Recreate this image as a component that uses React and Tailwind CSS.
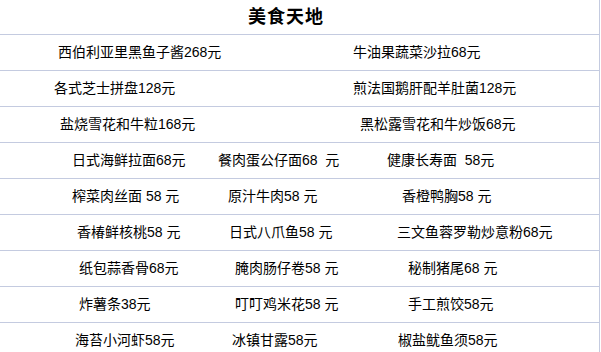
const wide = [
  [
    { text: "西伯利亚里黑鱼子酱", price: "268元", pad: "pl-[58px]" },
    { text: "牛油果蔬菜沙拉", price: "68元", pad: "pl-[53px]" },
  ],
  [
    { text: "各式芝士拼盘", price: "128元", pad: "pl-[54px]" },
    { text: "煎法国鹅肝配羊肚菌", price: "128元", pad: "pl-[53px]" },
  ],
  [
    { text: "盐烧雪花和牛粒", price: "168元", pad: "pl-[60px]" },
    { text: "黑松露雪花和牛炒饭", price: "68元", pad: "pl-[60px]" },
  ],
]

const narrow = [
  [
    { text: "日式海鲜拉面", price: "68元", pad: "pl-[72px]" },
    { text: "餐肉蛋公仔面", price: "68  元", pad: "pl-[18px]" },
    { text: "健康长寿面  ", price: "58元", pad: "pl-[17px]" },
  ],
  [
    { text: "榨菜肉丝面 ", price: "58 元", pad: "pl-[72px]" },
    { text: "原汁牛肉", price: "58 元", pad: "pl-[28px]" },
    { text: "香橙鸭胸", price: "58 元", pad: "pl-[32px]" },
  ],
  [
    { text: "香椿鲜核桃", price: "58 元", pad: "pl-[77px]" },
    { text: "日式八爪鱼", price: "58 元", pad: "pl-[29px]" },
    { text: "三文鱼蓉罗勒炒意粉", price: "68元", pad: "pl-[27px]" },
  ],
  [
    { text: "纸包蒜香骨", price: "68元", pad: "pl-[79px]" },
    { text: "腌肉肠仔卷", price: "58 元", pad: "pl-[35px]" },
    { text: "秘制猪尾", price: "68 元", pad: "pl-[38px]" },
  ],
  [
    { text: "炸薯条", price: "38元", pad: "pl-[79px]" },
    { text: "叮叮鸡米花", price: "58 元", pad: "pl-[35px]" },
    { text: "手工煎饺", price: "58元", pad: "pl-[38px]" },
  ],
  [
    { text: "海苔小河虾", price: "58元", pad: "pl-[75px]" },
    { text: "冰镇甘露", price: "58元", pad: "pl-[32px]" },
    { text: "椒盐鱿鱼须", price: "58元", pad: "pl-[28px]" },
  ],
]

function Cell({ item, w }) {
  return (
    <div className={`${w} ${item.pad} flex items-center whitespace-pre`}>
      {item.text}
      {item.price}
    </div>
  )
}

export default function App() {
  return (
    <div
      className="w-[600px] h-[352px] overflow-hidden bg-white border-r border-[#c4cbe0] text-[14px] text-black"
      style={{ fontFamily: '"Liberation Sans", "Noto Sans CJK SC", sans-serif' }}
    >
      <div className="h-[35px] border-b border-[#c4cbe0] flex items-center pl-[248px]">
        <h1 className="text-[18px] font-bold tracking-[1px] leading-none">美食天地</h1>
      </div>

      {wide.map((row, i) => (
        <div key={i} className="h-[36px] border-b border-[#c4cbe0] flex">
          <Cell item={row[0]} w="w-[300px]" />
          <Cell item={row[1]} w="flex-1" />
        </div>
      ))}

      {narrow.map((row, i) => (
        <div key={i} className="h-[36px] border-b border-[#c4cbe0] flex">
          <Cell item={row[0]} w="w-[200px]" />
          <Cell item={row[1]} w="w-[170px]" />
          <Cell item={row[2]} w="flex-1" />
        </div>
      ))}
    </div>
  )
}
